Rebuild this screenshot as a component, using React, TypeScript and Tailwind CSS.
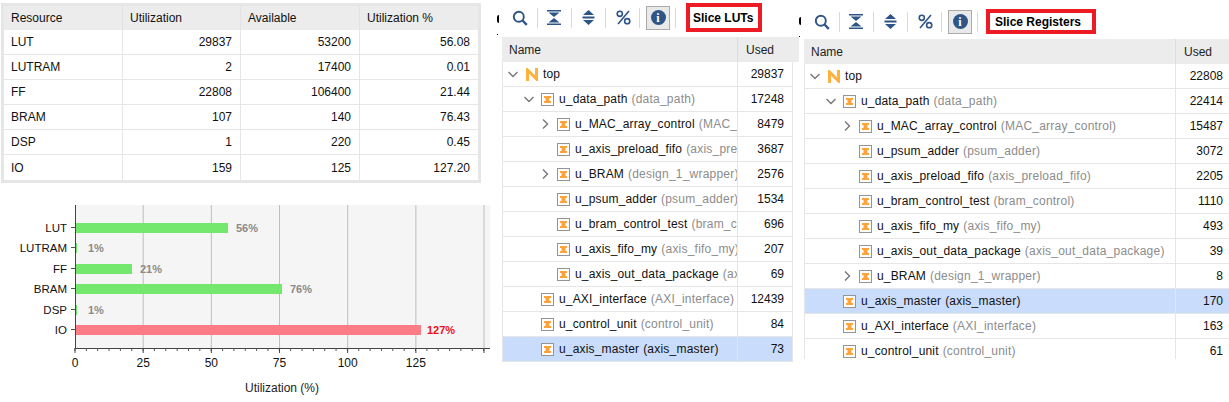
import React from "react";

type TreeRow = {
  name: string;
  mod: string;
  used: number;
  level: 0 | 1 | 2;
  arrow?: "open" | "closed";
  top?: boolean;
  selected?: boolean;
};

const summary = [
  ["LUT", "29837", "53200", "56.08"],
  ["LUTRAM", "2", "17400", "0.01"],
  ["FF", "22808", "106400", "21.44"],
  ["BRAM", "107", "140", "76.43"],
  ["DSP", "1", "220", "0.45"],
  ["IO", "159", "125", "127.20"],
];

const lutRows: TreeRow[] = [
  { name: "top", mod: "", used: 29837, level: 0, arrow: "open", top: true },
  { name: "u_data_path", mod: "(data_path)", used: 17248, level: 1, arrow: "open" },
  { name: "u_MAC_array_control", mod: "(MAC_array_control)", used: 8479, level: 2, arrow: "closed" },
  { name: "u_axis_preload_fifo", mod: "(axis_preload_fifo)", used: 3687, level: 2 },
  { name: "u_BRAM", mod: "(design_1_wrapper)", used: 2576, level: 2, arrow: "closed" },
  { name: "u_psum_adder", mod: "(psum_adder)", used: 1534, level: 2 },
  { name: "u_bram_control_test", mod: "(bram_control)", used: 696, level: 2 },
  { name: "u_axis_fifo_my", mod: "(axis_fifo_my)", used: 207, level: 2 },
  { name: "u_axis_out_data_package", mod: "(axis_out_data_package)", used: 69, level: 2 },
  { name: "u_AXI_interface", mod: "(AXI_interface)", used: 12439, level: 1 },
  { name: "u_control_unit", mod: "(control_unit)", used: 84, level: 1 },
  { name: "u_axis_master", mod: "(axis_master)", used: 73, level: 1, selected: true },
];

const regRows: TreeRow[] = [
  { name: "top", mod: "", used: 22808, level: 0, arrow: "open", top: true },
  { name: "u_data_path", mod: "(data_path)", used: 22414, level: 1, arrow: "open" },
  { name: "u_MAC_array_control", mod: "(MAC_array_control)", used: 15487, level: 2, arrow: "closed" },
  { name: "u_psum_adder", mod: "(psum_adder)", used: 3072, level: 2 },
  { name: "u_axis_preload_fifo", mod: "(axis_preload_fifo)", used: 2205, level: 2 },
  { name: "u_bram_control_test", mod: "(bram_control)", used: 1110, level: 2 },
  { name: "u_axis_fifo_my", mod: "(axis_fifo_my)", used: 493, level: 2 },
  { name: "u_axis_out_data_package", mod: "(axis_out_data_package)", used: 39, level: 2 },
  { name: "u_BRAM", mod: "(design_1_wrapper)", used: 8, level: 2, arrow: "closed" },
  { name: "u_axis_master", mod: "(axis_master)", used: 170, level: 1, selected: true },
  { name: "u_AXI_interface", mod: "(AXI_interface)", used: 163, level: 1 },
  { name: "u_control_unit", mod: "(control_unit)", used: 61, level: 1 },
];

const bars = [
  { label: "LUT", y: 28, w: 153, value: "56%", tx: 236 },
  { label: "LUTRAM", y: 48, w: 2, value: "1%", tx: 88 },
  { label: "FF", y: 69, w: 57, value: "21%", tx: 140 },
  { label: "BRAM", y: 89, w: 207, value: "76%", tx: 290 },
  { label: "DSP", y: 110, w: 2, value: "1%", tx: 88 },
  { label: "IO", y: 130, w: 346, value: "127%", tx: 427, over: true },
];

function UtilChart() {
  const ticks = [0, 25, 50, 75, 100, 125];
  const minor = Array.from({ length: 37 }, (_, i) => 75 + i * 11.35);
  return (
    <svg width="497" height="207" className="block" fontFamily="'Liberation Sans', Arial, sans-serif" fontSize="12">
      <rect x="75" y="10" width="415" height="143" fill="#f5f5f5" />
      {ticks.slice(1).concat([150]).map((t) => (
        <line key={t} x1={75 + t * 2.727} x2={75 + t * 2.727} y1="10" y2="153" stroke="#bdbdbd" />
      ))}
      {bars.map((b) => (
        <g key={b.label}>
          <rect x="75" y={b.y} width={b.w} height="10" fill={b.over ? "#ff7b85" : "#74e86c"} />
          <line x1="71" x2="75" y1={b.y + 4.5} y2={b.y + 4.5} stroke="#555" />
          <text x="67" y={b.y + 9} fontSize="11.5" textAnchor="end" fill="#111">{b.label}</text>
          <text x={b.tx} y={b.y + 9} fontSize="11" fontWeight="700" fill={b.over ? "#f01010" : "#8a8a8a"}>{b.value}</text>
        </g>
      ))}
      <line x1="75.5" x2="75.5" y1="10" y2="153" stroke="#444" />
      <line x1="75" x2="490" y1="153.5" y2="153.5" stroke="#444" />
      {minor.map((x) => (
        <line key={x} x1={x} x2={x} y1="153" y2="156" stroke="#555" />
      ))}
      {ticks.concat([150]).map((t) => (
        <line key={t} x1={75 + t * 2.727} x2={75 + t * 2.727} y1="153" y2="158" stroke="#444" />
      ))}
      {ticks.map((t) => (
        <text key={t} x={75 + t * 2.727} y="172" textAnchor="middle" fill="#111">{t}</text>
      ))}
      <text x="282" y="197" textAnchor="middle" fill="#222">Utilization (%)</text>
    </svg>
  );
}

function SummaryTable() {
  const cell = "flex items-center pl-[7px] pr-[8px] border-r border-b border-[#e6e6e6] last:border-r-0";
  return (
    <div className="w-[480px] border-[3px] border-[#e6e6e6] bg-white text-[12px] text-[#111]">
      <div className="grid grid-cols-[119px_118px_119px_118px] h-[24px] bg-[#ececec]">
        {["Resource", "Utilization", "Available", "Utilization %"].map((h) => (
          <div key={h} className="flex items-center px-[7px] border-r border-[#e2e2e2] last:border-r-0">{h}</div>
        ))}
      </div>
      {summary.map((row, i) => (
        <div key={row[0]} className="grid grid-cols-[119px_118px_119px_118px] h-[25px]">
          {row.map((v, j) => (
            <div key={j} className={`${cell} ${j > 0 ? "justify-end" : ""} ${i === summary.length - 1 ? "border-b-0" : ""}`}>{v}</div>
          ))}
        </div>
      ))}
    </div>
  );
}

function Chevron({ dir }: { dir: "open" | "closed" }) {
  return (
    <svg width="16" height="16" viewBox="0 0 16 16" fill="none" stroke="#777" strokeWidth="1.4">
      {dir === "open" ? <path d="M3.5 6l4.5 4.5L12.5 6" /> : <path d="M6 3.5L10.5 8 6 12.5" />}
    </svg>
  );
}

function ModuleIcon() {
  return (
    <svg width="13" height="13" viewBox="0 0 13 13" className="shrink-0">
      <rect x="0.5" y="0.5" width="12" height="12" fill="#fff" stroke="#949494" />
      <path d="M3 3h7v2H8.5v3H10v2H3V8h1.5V5H3z" fill="#ffa33a" />
    </svg>
  );
}

function TopIcon() {
  return (
    <svg width="12" height="13" viewBox="0 0 12 13" className="shrink-0">
      <path d="M1.5 13V2L10.5 11V0" fill="none" stroke="#ffb13d" strokeWidth="3" />
    </svg>
  );
}

function ToolbarIcons() {
  const sep = <div className="w-px h-[20px] bg-[#d9d9d9]" />;
  const color = "#2f5587";
  return (
    <>
      <svg width="16" height="16" viewBox="0 0 16 16" fill="none" stroke={color} strokeWidth="1.9">
        <circle cx="6.8" cy="6.8" r="5" />
        <path d="M10.5 10.5L14.8 14.8" strokeWidth="2.4" />
      </svg>
      <div className="ml-[9px] mr-[9px]">{sep}</div>
      <svg width="14" height="15" viewBox="0 0 14 15" fill={color}>
        <path d="M0 0h14v1.4H0zM1.5 2.6h11L7 7zM7 8l5.5 4.4h-11zM0 13.6h14V15H0z" />
      </svg>
      <div className="ml-[10px] mr-[10px]">{sep}</div>
      <svg width="13" height="15" viewBox="0 0 13 15" fill={color}>
        <path d="M6.5 0L12 5H1zM0.5 6.4h12v2.2H0.5zM1 10h11l-5.5 5z" />
      </svg>
      <div className="ml-[10px] mr-[10px]">{sep}</div>
      <svg width="15" height="15" viewBox="0 0 15 15" fill="none" stroke={color} strokeWidth="1.6">
        <circle cx="3.8" cy="3.8" r="2.6" />
        <circle cx="11.2" cy="11.2" r="2.6" />
        <path d="M13 1L2 14" />
      </svg>
      <div className="ml-[8px] mr-[6px]">{sep}</div>
      <div className="w-[24px] h-[24px] flex items-center justify-center bg-[#e9e9e9] border border-[#ababab]">
        <div className="w-[15px] h-[15px] rounded-full bg-[#2f5587] flex items-center justify-center text-white text-[12px] font-bold leading-none font-['Liberation_Serif',serif]">i</div>
      </div>
      <div className="ml-[5px]">{sep}</div>
    </>
  );
}

function Tree({ rows, title, variant }: { rows: TreeRow[]; title: string; variant: "lut" | "reg" }) {
  const isLut = variant === "lut";
  const nameW = isLut ? "w-[236px]" : "w-[372px]";
  const indent = ["pl-[2px]", "pl-[18px]", "pl-[34px]"];
  return (
    <div className={isLut ? "w-[297px] ml-[5px]" : "w-[425px] ml-[5px]"}>
      <div className={isLut ? "h-[37px] flex items-center pl-[10px] pb-[2px]" : "h-[39px] flex items-center pl-[10px] pt-[4px]"}>
        <ToolbarIcons />
        {isLut ? (
          <div className="ml-[10px] w-[76px] h-[29px] border-[4px] border-[#ed1c24] flex items-center pl-[3px] text-[12px] font-bold text-black">{title}</div>
        ) : (
          <div className="ml-[8px] w-[110px] h-[25px] border-[4px] border-[#ed1c24] flex items-center pl-[5px] text-[12px] font-bold text-black">{title}</div>
        )}
      </div>
      <div className="h-[25px] flex bg-[#ececec] text-[12px] text-[#222]">
        <div className={`${nameW} flex items-center pl-[7px] border-r border-[#dcdcdc]`}>Name</div>
        <div className="flex-1 flex items-center pl-[8px]">Used</div>
      </div>
      <div className={isLut ? "w-[291px] border-r border-[#e6e6e6] border-l" : "border-l border-[#e6e6e6] h-[295px] overflow-hidden"}>
        {rows.map((r) => (
          <div
            key={r.name}
            className={`h-[25px] flex text-[12px] border-b border-[#e6e6e6] ${r.selected ? "bg-[#c9dcfb]" : "bg-white"}`}
          >
            <div className={`${isLut ? "w-[235px]" : "w-[371px]"} shrink-0 overflow-hidden whitespace-nowrap flex items-center border-r border-[#e6e6e6] ${indent[r.level]}`}>
              <div className="w-[16px] h-[16px] shrink-0">{r.arrow && <Chevron dir={r.arrow} />}</div>
              <div className={r.top ? "ml-[5px] mr-[5px] flex" : "ml-[4px] mr-[5px] flex"}>
                {r.top ? <TopIcon /> : <ModuleIcon />}
              </div>
              <span className="text-[#111] tracking-[0.16px]">{r.name}</span>
              {r.mod && <span className={`ml-[4px] tracking-[0.22px] ${r.selected ? "text-[#111]" : "text-[#8c8c8c]"}`}>{r.mod}</span>}
            </div>
            <div className={`flex-1 flex items-center justify-end ${isLut ? "pr-[8px]" : "pr-[6px]"} text-[#111]`}>{r.used}</div>
          </div>
        ))}
      </div>
    </div>
  );
}

// splitter grips left over between the panes
function Grip({ className }: { className: string }) {
  return (
    <div className={`absolute ${className}`}>
      <div className="w-[2px] h-[8px] mt-[15px] rounded-l-full bg-black" />
      <div className="w-px h-px mt-[11px] bg-black" />
    </div>
  );
}

export default function App() {
  return (
    <div className="relative w-[1229px] h-[402px] bg-white overflow-hidden flex font-['Liberation_Sans',Arial,sans-serif]">
      <div className="w-[497px] shrink-0 pl-px pt-[3px]">
        <SummaryTable />
        <div className="mt-[12px] -ml-px">
          <UtilChart />
        </div>
      </div>
      <Tree rows={lutRows} title="Slice LUTs" variant="lut" />
      <Tree rows={regRows} title="Slice Registers" variant="reg" />
      <Grip className="left-[497px] top-0" />
      <Grip className="left-[799px] top-[2px]" />
    </div>
  );
}
